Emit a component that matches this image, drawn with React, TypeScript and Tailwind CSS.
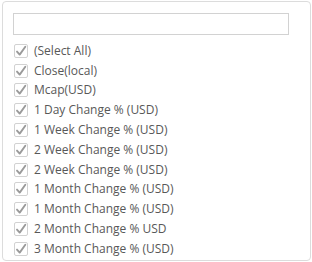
import React from "react";

const items = [
  "(Select All)",
  "Close(local)",
  "Mcap(USD)",
  "1 Day Change % (USD)",
  "1 Week Change % (USD)",
  "2 Week Change % (USD)",
  "2 Week Change % (USD)",
  "1 Month Change % (USD)",
  "1 Month Change % (USD)",
  "2 Month Change % USD",
  "3 Month Change % (USD)",
];

function Check() {
  return (
    <span className="w-[14px] h-[14px] border border-[#d2d2d2] rounded-[2px] bg-white flex items-center justify-center shrink-0">
      <svg width="12" height="12" viewBox="0 0 12 12">
        <path d="M2 6.6 L4.7 9.6 L10.3 1.8" fill="none" stroke="#9a9a9a" strokeWidth="1.9" strokeLinecap="round" strokeLinejoin="round" />
      </svg>
    </span>
  );
}

export default function App() {
  return (
    <div className="w-[312px] h-[262px] bg-white" style={{ fontFamily: '"Open Sans", sans-serif' }}>
      <div className="ml-[2px] mt-[1px] w-[309px] h-[260px] border border-[#dcdcdc] rounded-[4px] pl-[10px] pt-[11px]">
        <div className="w-[276px] h-[22px] border border-[#d2d2d2]" />
        <div className="mt-[6px] flex flex-col">
          {items.map((t, i) => (
            <div key={i} className="h-[19.8px] flex items-center pl-[1px] gap-[6px]">
              <Check />
              <span className="text-[12px] text-[#585858] leading-none">{t}</span>
            </div>
          ))}
        </div>
      </div>
    </div>
  );
}
